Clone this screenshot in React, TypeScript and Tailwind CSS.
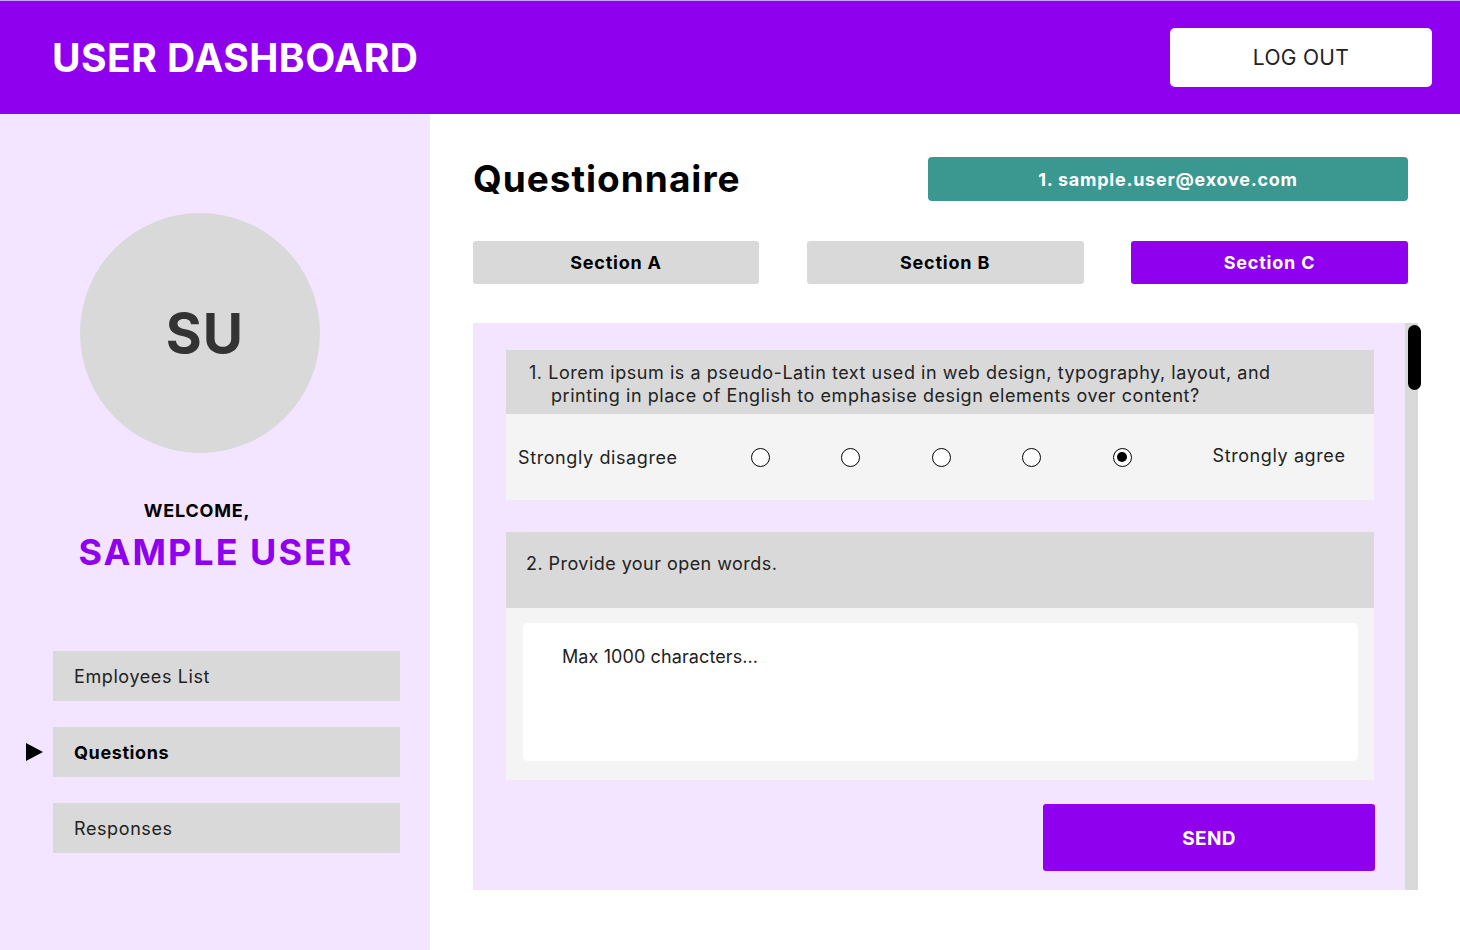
import { useState } from 'react'

const font = { fontFamily: 'Inter, "Noto Sans", sans-serif' }

const navItems = ['Employees List', 'Questions', 'Responses']
const sections = [
  { label: 'Section A', w: 'w-[286px]' },
  { label: 'Section B', w: 'w-[277px]' },
  { label: 'Section C', w: 'w-[277px]' },
]

export default function App() {
  const [active] = useState('Questions')
  const [section] = useState('Section C')
  const [answer, setAnswer] = useState(4)

  return (
    <div className="w-[1460px] h-[950px] bg-white flex flex-col overflow-hidden text-black" style={font}>
      {/* Header */}
      <header className="h-[114px] shrink-0 bg-[#8f00ef] border-t border-[#c9a6f2] flex items-center justify-between pl-[52px] pr-[28px]">
        <h1 className="text-[39px] font-bold text-white tracking-[0.5px] mt-[1px]">USER DASHBOARD</h1>
        <button className="w-[262px] h-[59px] bg-white rounded-[5px] text-[21px] text-[#222] tracking-[0.3px]">
          LOG OUT
        </button>
      </header>

      <div className="flex flex-1">
        {/* Sidebar */}
        <aside className="w-[430px] shrink-0 bg-[#f3e5ff] flex flex-col">
          <div className="ml-[80px] mt-[99px] w-[240px] h-[240px] rounded-full bg-[#d9d9d9] flex items-center justify-center pl-[10px]">
            <span className="text-[55px] font-bold text-[#333] tracking-[1px]">SU</span>
          </div>
          <p className="mt-[44px] w-[394px] text-center text-[18px] font-bold tracking-[0.8px]">WELCOME,</p>
          <p className="mt-[6px] w-[432px] text-center text-[36px] font-bold text-[#8f00ef] tracking-[2px] leading-[44px]">
            SAMPLE USER
          </p>
          <nav className="mt-[77px] flex flex-col gap-[26px]">
            {navItems.map((item) => (
              <div key={item} className="flex items-center">
                <div className="w-[53px] flex justify-end pr-[10px]">
                  {active === item && (
                    <svg width="18" height="18" viewBox="0 0 18 18">
                      <path d="M1 0 L18 9 L1 18 Z" fill="#000" />
                    </svg>
                  )}
                </div>
                <div
                  className={`w-[347px] h-[50px] bg-[#d9d9d9] flex items-center pl-[21px] text-[18px] tracking-[0.6px] ${
                    active === item ? 'font-bold' : 'text-[#222]'
                  }`}
                >
                  {item}
                </div>
              </div>
            ))}
          </nav>
        </aside>

        {/* Main */}
        <main className="flex-1 pl-[43px]">
          <div className="w-[935px] h-[44px] mt-[43px] flex items-center justify-between">
            <h2 className="text-[37px] leading-none font-bold tracking-[1px] -mt-[2px]">Questionnaire</h2>
            <div className="w-[480px] h-[44px] bg-[#3a9890] rounded-[4px] flex items-center justify-center text-white font-bold text-[18px] tracking-[0.75px]">
              1. sample.user@exove.com
            </div>
          </div>

          <div className="w-[935px] mt-[40px] flex justify-between">
            {sections.map((s) => (
              <button
                key={s.label}
                className={`${s.w} h-[43px] rounded-[3px] text-[18px] font-bold tracking-[0.8px] ${
                  section === s.label ? 'bg-[#8f00ef] text-white' : 'bg-[#d9d9d9] text-black'
                }`}
              >
                {s.label}
              </button>
            ))}
          </div>

          {/* Panel */}
          <div className="mt-[39px] w-[945px] h-[567px] flex">
            <div className="w-[932px] bg-[#f3e5ff] pt-[27px] pl-[33px]">
              {/* Question 1 */}
              <div className="w-[868px]">
                <div className="h-[64px] bg-[#d9d9d9] pl-[45px] -indent-[22px] pr-[80px] pt-[11px] text-[18px] leading-[23px] tracking-[0.55px] text-[#222]">
                  1. Lorem ipsum is a pseudo-Latin text used in web design, typography, layout, and printing in place of English to emphasise design elements over content?
                </div>
                <div className="h-[86px] bg-[#f4f4f4] flex items-center pl-[12px] text-[18px] tracking-[0.6px] text-[#222]">
                  <span className="w-[197px]">Strongly disagree</span>
                  {[0, 1, 2, 3, 4].map((i) => (
                    <div key={i} className="w-[90.5px] flex justify-center">
                      <button
                        onClick={() => setAnswer(i)}
                        className="w-[19px] h-[19px] rounded-full border-[1.5px] border-black bg-white flex items-center justify-center"
                      >
                        {answer === i && <span className="w-[10px] h-[10px] rounded-full bg-black" />}
                      </button>
                    </div>
                  ))}
                  <span className="ml-[45px] -mt-[4px]">Strongly agree</span>
                </div>
              </div>

              {/* Question 2 */}
              <div className="w-[868px] mt-[32px]">
                <div className="h-[76px] bg-[#d9d9d9] pl-[20px] pt-[18px] text-[18px] tracking-[0.45px] text-[#222]">
                  2. Provide your open words.
                </div>
                <div className="h-[172px] bg-[#f4f4f4] pt-[15px] pl-[17px]">
                  <div className="w-[835px] h-[138px] bg-white rounded-[5px] pl-[39px] pt-[20px] text-[18px] tracking-[0.1px] text-[#222]">
                    Max 1000 characters...
                  </div>
                </div>
              </div>

              <div className="w-[869px] mt-[24px] flex justify-end">
                <button className="w-[332px] h-[67px] bg-[#8f00ef] rounded-[3px] text-white font-bold text-[19px] tracking-[0.3px] pt-[4px]">
                  SEND
                </button>
              </div>
            </div>

            {/* Scrollbar */}
            <div className="relative w-[13px] bg-[#d9d9d9]">
              <div className="absolute left-[3px] top-[2px] w-[13px] h-[65px] rounded-full bg-black" />
            </div>
          </div>
        </main>
      </div>
    </div>
  )
}
